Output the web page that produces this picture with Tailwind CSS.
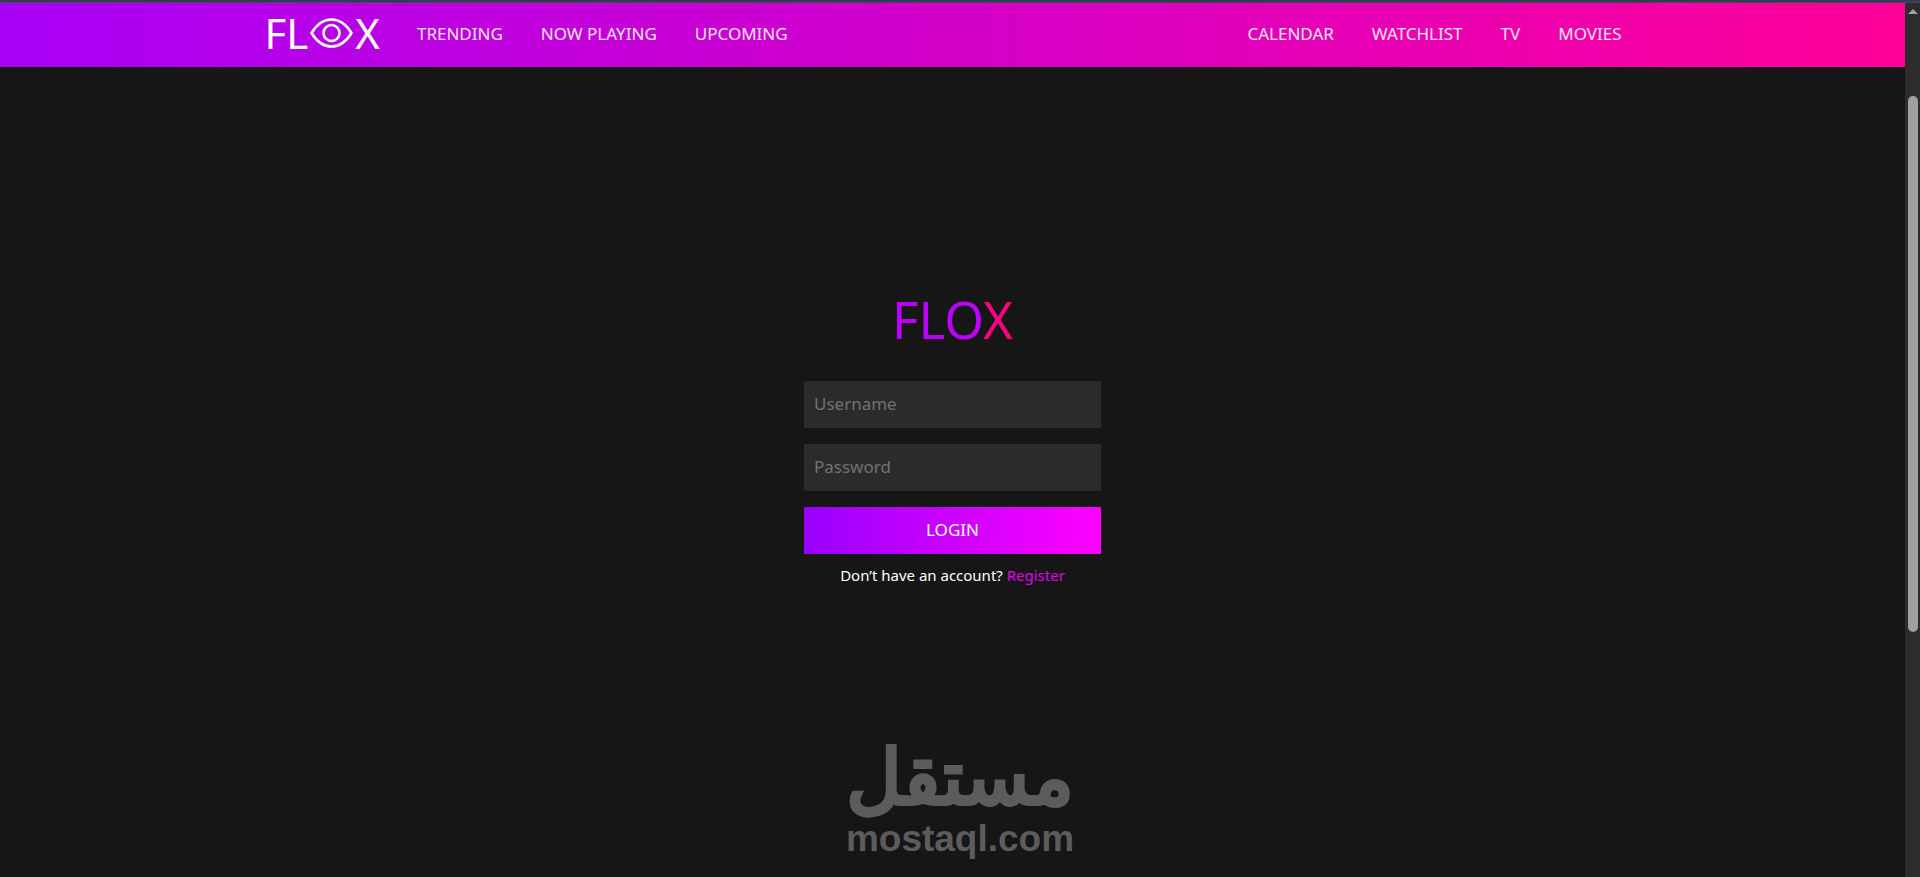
<!DOCTYPE html>
<html lang="en">
<head>
  <meta charset="UTF-8" />
  <meta name="viewport" content="width=device-width, initial-scale=1.0" />
  <title>Flox - Login</title>
  <script src="https://cdn.jsdelivr.net/npm/@tailwindcss/browser@4"></script>
</head>
<body class="relative flex min-h-screen flex-col bg-[#161616] font-['Noto_Sans',sans-serif] text-[17px] text-white">

  <!-- Window edge -->
  <div class="h-[3px] border-b border-[#4f4458] bg-[#2c3e50]"></div>

  <div class="flex flex-1">
    <div class="flex flex-1 flex-col">

      <!-- Header -->
      <header class="bg-linear-to-r/srgb from-[#a800f7] to-[#ff0099]">
        <div class="mx-auto flex h-16 max-w-[1376px] items-center justify-between pb-[3px]">
          <div class="flex items-center">
            <a href="#" aria-label="FLOX" class="mr-[18px] flex items-center pb-px text-[42px] leading-[58px]">
              <span>FL</span>
              <svg class="mx-[2px] h-[30px] w-[43px]" viewBox="0 0 43 30" fill="none" stroke="currentColor" stroke-width="2.6" stroke-linejoin="round">
                <path d="M1.5 15C7 6 14 1.5 21.5 1.5S36 6 41.5 15C36 24 29 28.5 21.5 28.5S7 24 1.5 15Z" />
                <circle cx="21.5" cy="15" r="8" />
              </svg>
              <span>X</span>
            </a>
            <nav class="flex">
              <a href="#" class="px-[19px] text-white/90 hover:underline">TRENDING</a>
              <a href="#" class="px-[19px] text-white/90 hover:underline">NOW PLAYING</a>
              <a href="#" class="px-[19px] text-white/90 hover:underline">UPCOMING</a>
            </nav>
          </div>
          <nav class="flex">
            <a href="#" class="px-[19px] text-white/90 hover:underline">CALENDAR</a>
            <a href="#" class="px-[19px] text-white/90 hover:underline">WATCHLIST</a>
            <a href="#" class="px-[19px] text-white/90 hover:underline">TV</a>
            <a href="#" class="px-[19px] text-white/90 hover:underline">MOVIES</a>
          </nav>
        </div>
      </header>

      <!-- Login -->
      <main class="flex flex-1 flex-col items-center pt-[225px]">
        <h1 class="text-[51px] leading-[54px] text-[#bb00ff]">FLO<span class="text-[#ff0080]">X</span></h1>
        <form class="mt-[35px] flex w-full max-w-[297px] flex-col gap-4">
          <input type="text" aria-label="Username" placeholder="Username" class="h-[47px] w-full bg-[#2b2b2b] px-[10px] pb-[3px] outline-none placeholder:text-[#6f7275]" />
          <input type="password" aria-label="Password" placeholder="Password" class="h-[47px] w-full bg-[#2b2b2b] px-[10px] pb-[3px] outline-none placeholder:text-[#6f7275]" />
          <button type="submit" class="h-[47px] w-full bg-linear-to-r/srgb from-[#9900ff] to-[#ff00ff] pb-[2px] hover:opacity-90">LOGIN</button>
        </form>
        <p class="mt-[11px] text-[15px] leading-5">Don’t have an account? <a href="#" class="text-[#e000f0] hover:underline">Register</a></p>
      </main>
    </div>

    <!-- Scrollbar -->
    <div class="flex w-[15px] flex-col items-center bg-[#2c2c2c] pt-[6px]" aria-hidden="true">
      <svg class="h-[5px] w-[10px] fill-[#a0a0a0]" viewBox="0 0 10 5"><path d="M5 0L10 5H0Z" /></svg>
      <div class="mt-[82px] h-[536px] w-[10px] rounded-full bg-[#a0a0a0]"></div>
    </div>
  </div>

  <!-- Watermark -->
  <div class="pointer-events-none absolute inset-x-0 bottom-5 flex flex-col items-center text-[#5c5c5c]">
    <span lang="ar" dir="rtl" class="mb-1 font-['DejaVu_Sans',sans-serif] text-[76px] leading-[76px] [-webkit-text-stroke:4px_#5c5c5c]">مستقل</span>
    <span class="font-['Liberation_Sans',sans-serif] text-[37px] leading-[37px] font-bold">mostaql.com</span>
  </div>

</body>
</html>
